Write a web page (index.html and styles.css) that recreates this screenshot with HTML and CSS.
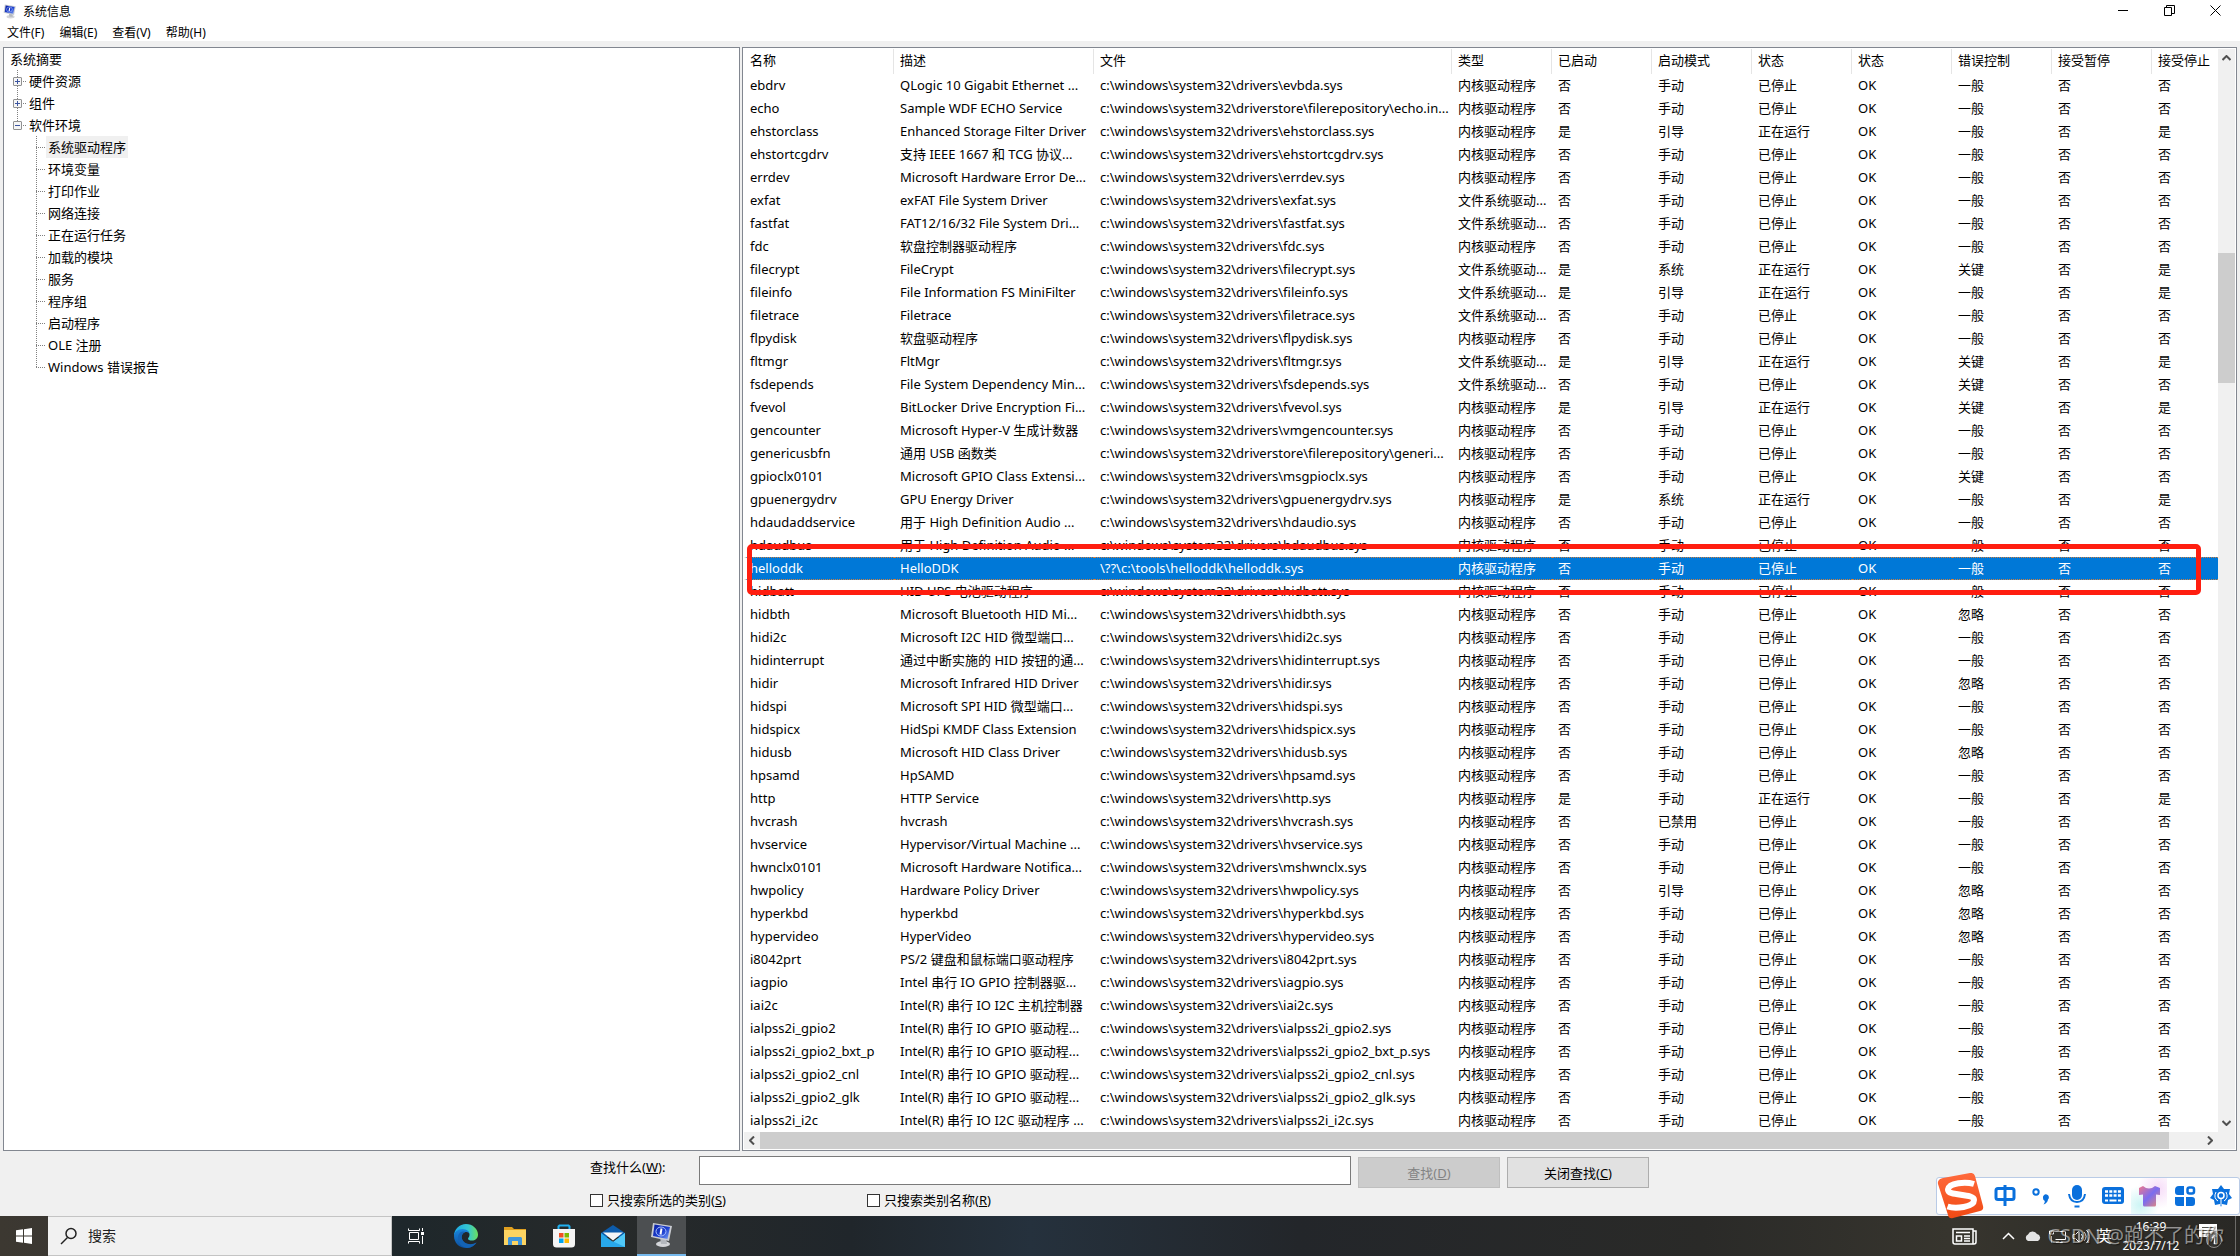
FILE: index.html
```html
<!DOCTYPE html>
<html lang="zh-CN">
<head>
<meta charset="utf-8">
<title>系统信息</title>
<link rel="stylesheet" href="styles.css">
</head>
<body>
<svg class="defs" width="0" height="0" aria-hidden="true">
  <defs>
    <linearGradient id="screen" x1="0" y1="0" x2="1" y2="1"><stop offset="0" stop-color="#0a1e9c"/><stop offset=".55" stop-color="#1c3fd0"/><stop offset="1" stop-color="#7fa4f5"/></linearGradient>
    <linearGradient id="edgeA" x1="0" y1="0" x2="1" y2="0"><stop offset="0" stop-color="#1ba8e6"/><stop offset=".6" stop-color="#35c6d0"/><stop offset="1" stop-color="#6be05c"/></linearGradient>
    <linearGradient id="edgeB" x1="0" y1="0" x2="0" y2="1"><stop offset="0" stop-color="#1a86dc"/><stop offset="1" stop-color="#0c4f9e"/></linearGradient>
    <linearGradient id="shirt" x1="0" y1="0" x2="1" y2="1"><stop offset="0" stop-color="#f0788c"/><stop offset=".5" stop-color="#7a6cf0"/><stop offset="1" stop-color="#f08a70"/></linearGradient>
    <linearGradient id="sogou" x1="0" y1="0" x2="0" y2="1"><stop offset="0" stop-color="#ff6a3c"/><stop offset="1" stop-color="#f04a14"/></linearGradient>
    <symbol id="msinfo" viewBox="0 0 24 26">
      <ellipse cx="13" cy="22" rx="7" ry="3" fill="#d4d6da"/>
      <path d="M10 15l6 1 1 6h-6z" fill="#b4b8be"/>
      <path d="M3 1l19 3-3 15L1 15z" fill="#c9ccd2"/>
      <path d="M4.500 2.500L20 5l-2.500 12L3 14z" fill="url(#screen)"/>
      <ellipse cx="11" cy="9.500" rx="5" ry="4.500" fill="none" stroke="#a9c0ff"/>
      <path d="M11.500 6.500l-1 6" stroke="#fff" stroke-width="2"/>
    </symbol>
  </defs>
</svg>

<header class="window-head">
  <div class="title-bar">
    <svg class="app-icon" width="14" height="15"><use href="#msinfo"/></svg>
    <h1 class="title">系统信息</h1>
    <div class="window-controls">
      <button type="button" class="window-button" aria-label="最小化"><svg width="11" height="11"><path d="M0 5.500h10" stroke="#000"/></svg></button>
      <button type="button" class="window-button" aria-label="还原"><svg width="11" height="11" fill="none" stroke="#000"><path d="M.5 2.500h7v8h-7zM2.500 2.500v-2h8v8h-3"/></svg></button>
      <button type="button" class="window-button" aria-label="关闭"><svg width="11" height="11"><path d="M.5 .5l10 10M10.500 .5l-10 10" stroke="#000"/></svg></button>
    </div>
  </div>
  <nav class="menu-bar">
    <button type="button" class="menu-item">文件(F)</button>
    <button type="button" class="menu-item">编辑(E)</button>
    <button type="button" class="menu-item">查看(V)</button>
    <button type="button" class="menu-item">帮助(H)</button>
  </nav>
</header>

<main class="panes">
  <nav class="pane tree-pane" aria-label="类别">
    <a class="tree-root" href="#">系统摘要</a>
    <ul class="tree">
      <li><div class="branch"><button type="button" class="expander plus" aria-label="展开"></button><span class="dash"></span><a href="#">硬件资源</a></div></li>
      <li><div class="branch"><button type="button" class="expander plus" aria-label="展开"></button><span class="dash"></span><a href="#">组件</a></div></li>
      <li><div class="branch"><button type="button" class="expander" aria-label="折叠"></button><span class="dash"></span><a href="#">软件环境</a></div>
        <ul class="leaves">
          <li class="leaf"><a class="current" href="#">系统驱动程序</a></li>
          <li class="leaf"><a href="#">环境变量</a></li>
          <li class="leaf"><a href="#">打印作业</a></li>
          <li class="leaf"><a href="#">网络连接</a></li>
          <li class="leaf"><a href="#">正在运行任务</a></li>
          <li class="leaf"><a href="#">加载的模块</a></li>
          <li class="leaf"><a href="#">服务</a></li>
          <li class="leaf"><a href="#">程序组</a></li>
          <li class="leaf"><a href="#">启动程序</a></li>
          <li class="leaf"><a href="#">OLE 注册</a></li>
          <li class="leaf"><a href="#">Windows 错误报告</a></li>
        </ul>
      </li>
    </ul>
  </nav>

  <section class="pane list-pane">
    <div class="list-view">
      <table class="drivers">
        <colgroup><col class="c-name"><col class="c-desc"><col class="c-file"><col span="8" class="c-short"></colgroup>
        <thead><tr><th>名称</th><th>描述</th><th>文件</th><th>类型</th><th>已启动</th><th>启动模式</th><th>状态</th><th>状态</th><th>错误控制</th><th>接受暂停</th><th>接受停止</th></tr></thead>
        <tbody id="driver-rows"></tbody>
      </table>
    </div>
    <div class="scroll-v" aria-hidden="true">
      <svg class="arrow-v" width="9" height="6"><path d="M.5 5L4.500 1l4 4" fill="none" stroke="#505050" stroke-width="2"/></svg>
      <span class="space-before-v"></span><span class="thumb-v"></span><span class="space-after-v"></span>
      <svg class="arrow-v" width="9" height="6"><path d="M.5 1l4 4 4-4" fill="none" stroke="#505050" stroke-width="2"/></svg>
    </div>
    <div class="scroll-h" aria-hidden="true">
      <svg class="arrow-h" width="6" height="9"><path d="M5 .5L1 4.500l4 4" fill="none" stroke="#505050" stroke-width="2"/></svg>
      <span class="thumb-h"></span><span class="space-after-h"></span>
      <svg class="arrow-h" width="6" height="9"><path d="M1 .5l4 4-4 4" fill="none" stroke="#505050" stroke-width="2"/></svg>
    </div>
    <div class="red-frame"></div>
  </section>
</main>

<form class="find-bar">
  <div class="find-row">
    <label class="find-label" for="find-text">查找什么(<u>W</u>):</label>
    <input class="find-input" id="find-text" type="text">
    <button type="button" class="find-button" disabled>查找(<u>D</u>)</button>
    <button type="button" class="find-button">关闭查找(<u>C</u>)</button>
  </div>
  <div class="check-row">
    <label class="check"><input type="checkbox">只搜索所选的类别(<u>S</u>)</label>
    <label class="check"><input type="checkbox">只搜索类别名称(<u>R</u>)</label>
  </div>
</form>

<footer class="taskbar">
  <button type="button" class="start" aria-label="开始"><svg width="16" height="16" fill="#fff"><path d="M0 2.300L7 1.300V7.500H0zM8 1.200L16 0v7.500H8zM0 8.500h7v6.200L0 13.700zM8 8.500h8V16L8 14.800z"/></svg></button>
  <label class="search">
    <svg width="18" height="18" fill="none" stroke="#222" stroke-width="1.500"><circle cx="11" cy="6.500" r="5"/><path d="M7.500 10.500L1 17"/></svg>
    <input type="text" placeholder="搜索" aria-label="搜索">
  </label>
  <div class="apps">
    <button type="button" class="app task-view" aria-label="任务视图"><svg width="17" height="16" fill="none" stroke="#fff"><path d="M1.500 4.500h9v7h-9zM.5 .5v2h11v-2M.5 15.500v-2h11v2M14.500 0v3M14.500 8v8"/><path d="M13 4h3v3h-3z" fill="#fff" stroke="none"/></svg></button>
    <button type="button" class="app" aria-label="Edge"><svg width="24" height="24"><path d="M0 12C0 5 5.500 0 12 0s12 5 12 10.500c0 4-3 6-6 6-2.500 0-4-.8-4-1.800s1.500-1.500 1.500-4C15.500 8 13 6 10 6 5 6 1 9 0 12z" fill="url(#edgeA)"/><path d="M0 12c0-4 4-7 8.500-7C13 5 15.500 8 15.500 10.500c0-1.500-2-3-4-2.500-3 .7-4.500 4-3.500 7 1.200 3.500 5 6 9 5.500 2.500-.3 4-1 5.500-2C20.500 22 16.500 24 12 24 5 24 0 18.500 0 12z" fill="url(#edgeB)"/><path d="M8 15c-1-3 .5-6.500 3.500-7C7 6 3.500 10 4 15c.6 5 4.500 8.500 9 8.900 4.500-.2 7.500-2.400 9.500-5.400-6 3.500-13 1-14.500-3.500z" fill="#1463b4"/></svg></button>
    <button type="button" class="app" aria-label="文件资源管理器"><svg width="22" height="18"><path d="M0 0h8l2 2h12v3H0z" fill="#e0a020"/><path d="M0 3h22v15H0z" fill="#fcd462"/><path d="M4 18v-7l1-1h12l1 1v7h-4v-4H8v4z" fill="#3f96dc"/></svg></button>
    <button type="button" class="app" aria-label="Microsoft Store"><svg width="24" height="24"><path d="M6.500 6V2.500l1-1h9l1 1V6" fill="none" stroke="#20b0f0" stroke-width="2"/><path d="M1 5h22v15q0 3.500-3.500 3.500h-15Q1 23.500 1 20z" fill="#f4f4f4"/><path d="M7 9h4.500v4.500H7z" fill="#f25022"/><path d="M12.500 9H17v4.500h-4.500z" fill="#7fba00"/><path d="M7 14.500h4.500V19H7z" fill="#00a4ef"/><path d="M12.500 14.500H17V19h-4.500z" fill="#ffb900"/></svg></button>
    <button type="button" class="app" aria-label="邮件"><svg width="24" height="24"><path d="M0 9L12 1l12 8v4H0z" fill="#0d5cab"/><path d="M0 9l12 9 12-9v14H0z" fill="#28a8ea"/><path d="M24 9v14L10 16.500l2 1.500z" fill="#50c8f8"/><path d="M2 8.500h20L12 16.500z" fill="#f6f6f6"/></svg></button>
    <button type="button" class="app active" aria-label="系统信息"><svg width="24" height="26"><use href="#msinfo"/></svg></button>
  </div>

  <div class="tray">
    <svg class="news" width="25" height="17" fill="none" stroke="#fff" stroke-width="1.500"><path d="M1 1h20v15H3q-2 0-2-2zM21 3h3v11q0 2-2 2h-2M4 4.500h14M4.500 8h5v5h-5zM12 8h6M12 10.500h6M12 13h6"/></svg>
    <svg class="chevron" width="13" height="8"><path d="M1 7l5.500-5.500L12 7" fill="none" stroke="#fff" stroke-width="1.500"/></svg>
    <svg class="cloud" width="18" height="12"><path d="M4 11a3.500 3.500 0 0 1 0-6.500A5 5 0 0 1 13 4a3.700 3.700 0 0 1 1 7z" fill="#e4e4e4"/></svg>
    <svg class="network" width="17" height="13" fill="none" stroke="#fff"><path d="M4.500 1.500h12v8h-10M2.500 6v6.500M7 12.500h7M.5 1v3h4V1z"/></svg>
    <svg class="volume" width="20" height="15" fill="none" stroke="#fff"><path d="M1 5.500h2.500L7 2v11L3.500 9.500H1zM9.500 5q2 2.500 0 5M12 3q4 4.500 0 9M14.500 1q6 6.500 0 13"/></svg>
    <span class="ime">英</span>
    <time class="clock"><span>16:39</span><span>2023/7/12</span></time>
    <svg class="notice" width="27" height="26"><path d="M1 1h18v13h-4l-4 4v-4H1z" fill="#fff"/><path d="M4 4.500h12M4 7.500h12M4 10.500h8" stroke="#55534c"/><circle cx="16" cy="17" r="7.500" fill="#3a3935" fill-opacity=".7" stroke="#8c8b88"/><path d="M14 15l2.500-2v8" fill="none" stroke="#fff" stroke-width="1.500"/></svg>
    <span class="show-desktop"></span>
  </div>
  <span class="watermark">CSDN @跑不了的你</span>
</footer>

<aside class="ime-bar" aria-label="输入法">
  <svg class="ime-logo" width="48" height="46"><path d="M6 5L33 0q4-.5 5 3l8 30q1 4-3 5l-27 7q-4 1-5-3L1 11Q0 6.500 6 5z" fill="url(#sogou)"/><path d="M37 11C29 8.500 12 9.500 11 16.500c-.8 7 26 3.500 26 10.500 0 7.500-19 9-26.500 6.500" fill="none" stroke="#fff" stroke-width="6"/></svg>
  <svg width="36" height="36" fill="none" stroke="#0a70dc" stroke-width="3"><path d="M9 12.500q0-2 2-2h14q2 0 2 2v7q0 2-2 2H11q-2 0-2-2zM18 7v21"/></svg>
  <svg width="36" height="36"><circle cx="13" cy="14" r="2.700" fill="none" stroke="#0a70dc" stroke-width="2"/><path d="M20 20a3 3 0 1 1 5 1.500q-.5 3.500-4.500 5 1.500-2 1.300-3.500A3 3 0 0 1 20 20z" fill="#0a70dc"/></svg>
  <svg width="36" height="36"><rect x="13" y="7" width="10" height="15" rx="5" fill="#0a70dc"/><path d="M10 16q1 8 8 8t8-8M15.500 28.500h5" fill="none" stroke="#0a70dc" stroke-width="2"/></svg>
  <svg width="36" height="36"><rect x="7" y="9" width="22" height="17" rx="3" fill="#0a70dc"/><path d="M10 13.500h16M10 17.500h16" stroke="#fff" stroke-width="2.500" stroke-dasharray="3 1.300"/><path d="M10 22.500h3M14.500 22.500h7M23 22.500h3" stroke="#fff" stroke-width="2"/></svg>
  <svg class="skin" width="36" height="36"><path d="M12 8q6 5 12 0l5 2v7l-4-.5V27q0 1.500-1.500 1.500h-10Q12 28.500 12 27V16.500L8 17v-7z" fill="url(#shirt)"/></svg>
  <svg width="36" height="36" fill="#0a70dc"><path d="M8 12q0-4 4-4h5v9h-6q-3 0-3-3zM8 19h9v9h-6q-3 0-3-3zM19 19h6q3 0 3 3v3q0 3-3 3h-6z"/><rect x="20.500" y="9.500" width="6.500" height="6" rx="2" fill="none" stroke="#0a70dc" stroke-width="2.500"/></svg>
  <svg width="36" height="36"><path d="M18 7l3 4h6l-1 5 3 4-4 2-1 5-5-1-1 3-1-3-5 1-1-5-4-2 3-4-1-5h6z" fill="#0a70dc"/><circle cx="18" cy="17.500" r="3" fill="none" stroke="#fff" stroke-width="1.500"/><path d="M13 14q-3 6 2 9M23 14q3 6-2 9M18 20v7" fill="none" stroke="#fff"/></svg>
</aside>
<script src="drivers.js"></script>
</body>
</html>
```
FILE: drivers.js
```javascript
// Each line: name | description | file | flags.
// A file without a directory lives in the drivers folder.
const DIR = 'c:\\windows\\system32\\drivers\\';
const LIST = String.raw`
ebdrv|QLogic 10 Gigabit Ethernet ...|evbda.sys|
echo|Sample WDF ECHO Service|c:\windows\system32\driverstore\filerepository\echo.in...|
ehstorclass|Enhanced Storage Filter Driver|ehstorclass.sys|run boot
ehstortcgdrv|支持 IEEE 1667 和 TCG 协议...|ehstortcgdrv.sys|
errdev|Microsoft Hardware Error De...|errdev.sys|
exfat|exFAT File System Driver|exfat.sys|fs
fastfat|FAT12/16/32 File System Dri...|fastfat.sys|fs
fdc|软盘控制器驱动程序|fdc.sys|
filecrypt|FileCrypt|filecrypt.sys|fs run system critical
fileinfo|File Information FS MiniFilter|fileinfo.sys|fs run boot
filetrace|Filetrace|filetrace.sys|fs
flpydisk|软盘驱动程序|flpydisk.sys|
fltmgr|FltMgr|fltmgr.sys|fs run boot critical
fsdepends|File System Dependency Min...|fsdepends.sys|fs critical
fvevol|BitLocker Drive Encryption Fi...|fvevol.sys|run boot critical
gencounter|Microsoft Hyper-V 生成计数器|vmgencounter.sys|
genericusbfn|通用 USB 函数类|c:\windows\system32\driverstore\filerepository\generi...|
gpioclx0101|Microsoft GPIO Class Extensi...|msgpioclx.sys|critical
gpuenergydrv|GPU Energy Driver|gpuenergydrv.sys|run system
hdaudaddservice|用于 High Definition Audio ...|hdaudio.sys|
hdaudbus|用于 High Definition Audio ...|hdaudbus.sys|
helloddk|HelloDDK|\??\c:\tools\helloddk\helloddk.sys|selected
hidbatt|HID UPS 电池驱动程序|hidbatt.sys|
hidbth|Microsoft Bluetooth HID Mi...|hidbth.sys|ignore
hidi2c|Microsoft I2C HID 微型端口...|hidi2c.sys|
hidinterrupt|通过中断实施的 HID 按钮的通...|hidinterrupt.sys|
hidir|Microsoft Infrared HID Driver|hidir.sys|ignore
hidspi|Microsoft SPI HID 微型端口...|hidspi.sys|
hidspicx|HidSpi KMDF Class Extension|hidspicx.sys|
hidusb|Microsoft HID Class Driver|hidusb.sys|ignore
hpsamd|HpSAMD|hpsamd.sys|
http|HTTP Service|http.sys|run
hvcrash|hvcrash|hvcrash.sys|disabled
hvservice|Hypervisor/Virtual Machine ...|hvservice.sys|
hwnclx0101|Microsoft Hardware Notifica...|mshwnclx.sys|
hwpolicy|Hardware Policy Driver|hwpolicy.sys|boot ignore
hyperkbd|hyperkbd|hyperkbd.sys|ignore
hypervideo|HyperVideo|hypervideo.sys|ignore
i8042prt|PS/2 键盘和鼠标端口驱动程序|i8042prt.sys|
iagpio|Intel 串行 IO GPIO 控制器驱...|iagpio.sys|
iai2c|Intel(R) 串行 IO I2C 主机控制器|iai2c.sys|
ialpss2i_gpio2|Intel(R) 串行 IO GPIO 驱动程...|ialpss2i_gpio2.sys|
ialpss2i_gpio2_bxt_p|Intel(R) 串行 IO GPIO 驱动程...|ialpss2i_gpio2_bxt_p.sys|
ialpss2i_gpio2_cnl|Intel(R) 串行 IO GPIO 驱动程...|ialpss2i_gpio2_cnl.sys|
ialpss2i_gpio2_glk|Intel(R) 串行 IO GPIO 驱动程...|ialpss2i_gpio2_glk.sys|
ialpss2i_i2c|Intel(R) 串行 IO I2C 驱动程序 ...|ialpss2i_i2c.sys|`;

const body = document.getElementById('driver-rows');
for (const line of LIST.trim().split('\n')) {
  const [name, description, file, flagText] = line.split('|');
  const flags = flagText.split(' ');
  const has = (flag) => flags.includes(flag);
  const running = has('run');
  const cells = [
    name,
    description,
    file.includes('\\') ? file : DIR + file,
    has('fs') ? '文件系统驱动...' : '内核驱动程序',
    running ? '是' : '否',
    has('boot') ? '引导' : has('system') ? '系统' : has('disabled') ? '已禁用' : '手动',
    running ? '正在运行' : '已停止',
    'OK',
    has('critical') ? '关键' : has('ignore') ? '忽略' : '一般',
    '否',
    running ? '是' : '否',
  ];
  const row = body.insertRow();
  if (has('selected')) row.className = 'selected';
  for (const text of cells) row.insertCell().textContent = text;
}
```
FILE: styles.css
```css
* { box-sizing: border-box; }

body {
  margin: 0;
  height: 100vh;
  display: flex;
  flex-direction: column;
  overflow: hidden;
  position: relative;
  background: #f0f0f0;
  color: #000;
  font: 13px/22px "Noto Sans", "Noto Sans CJK SC", sans-serif;
}

button, input { font: inherit; color: inherit; }
button { padding: 0; border: 0; background: none; }
a { color: inherit; text-decoration: none; }
ul { margin: 0; padding: 0; list-style: none; }
svg { display: block; flex: none; }
.defs { position: absolute; }

/* Title and menu */
.window-head { flex: none; background: #fff; font-size: 12px; }
.title-bar { display: flex; align-items: center; height: 23px; padding: 0 2px 0 3px; }
.title { flex: 1; margin: 0 0 0 6px; font-size: 12px; font-weight: 400; }
.window-controls { display: flex; align-self: flex-start; }
.window-button { width: 46px; height: 21px; display: grid; place-items: center; }
.menu-bar { display: flex; gap: 15px; height: 18px; padding-left: 7px; }
.menu-item { line-height: 20px; }

/* Panes */
.panes {
  flex: 1;
  min-height: 0;
  display: grid;
  grid-template-columns: 737fr 1495fr;
  grid-template-rows: minmax(0, 1fr);
  gap: 2px;
  padding: 6px 3px 0;
}
.pane { border: 1px solid #828790; background: #fff; padding: 1px; min-width: 0; }
.tree-pane { padding-top: 0; }

.tree-root { display: block; padding-left: 5px; }
.tree, .leaves { background: repeating-linear-gradient(#808080 0 1px, transparent 1px 2px) no-repeat; }
.tree { background-size: 1px 55px; background-position: 12px 0; }
.branch { display: flex; align-items: center; height: 22px; padding-left: 8px; }
.expander {
  width: 9px;
  height: 9px;
  border: 1px solid #919191;
  border-radius: 1px;
  background: linear-gradient(#3c55a0, #3c55a0) center / 5px 1px no-repeat, #f6f6f6;
}
.expander.plus {
  background: linear-gradient(#3c55a0, #3c55a0) center / 5px 1px no-repeat,
    linear-gradient(#3c55a0, #3c55a0) center / 1px 5px no-repeat, #f6f6f6;
}
.dash { width: 5px; height: 1px; margin-right: 2px; background: repeating-linear-gradient(90deg, transparent 0 1px, #808080 1px 2px); }
.leaves { background-size: 1px calc(100% - 11px); background-position: 31px 0; }
.leaf { height: 22px; padding-left: 31px; display: flex; }
.leaf::before {
  content: "";
  width: 10px;
  height: 1px;
  margin-top: 11px;
  background: repeating-linear-gradient(90deg, #808080 0 1px, transparent 1px 2px);
}
.leaf a { padding: 0 2px; }
.leaf .current { background: #f0f0f0; }

/* Driver list */
.list-pane {
  position: relative;
  display: grid;
  grid-template-columns: minmax(0, 1fr) 17px;
  grid-template-rows: minmax(0, 1fr) 17px;
}
.list-view { overflow: hidden; }
.drivers { width: 1508px; table-layout: fixed; border-collapse: separate; border-spacing: 0; }
.c-name { width: 150px; }
.c-desc { width: 200px; }
.c-file { width: 358px; }
.c-short { width: 100px; }
.drivers th, .drivers td { padding: 0 0 0 6px; text-align: left; font-weight: 400; vertical-align: top; white-space: nowrap; overflow: hidden; }
.drivers th { height: 25px; line-height: 23px; border-right: 1px solid #e5e5e5; }
.drivers td { height: 23px; line-height: 22px; }
.drivers .selected td {
  color: #fff;
  background: #0078d7;
  border: dotted #d08040;
  border-width: 1px 0;
  line-height: 20px;
}
.drivers .selected td:first-child { border-left: 4px solid #fff; padding-left: 2px; }
.red-frame {
  position: absolute;
  left: 4px;
  right: 35px;
  top: 496px;
  height: 51px;
  border: 5px solid #ff1e10;
  border-radius: 5px;
}

.scroll-v, .scroll-h { display: flex; align-items: center; background: #f0f0f0; }
.scroll-v { flex-direction: column; padding: 6px 0; }
.space-before-v { flex: 192; }
.thumb-v { flex: 130; width: 100%; background: #cdcdcd; }
.space-after-v { flex: 737; }
.scroll-h { grid-column: 1 / -1; padding: 0 22px 0 5px; }
.thumb-h { flex: 1408; align-self: stretch; margin-left: 5px; background: #cdcdcd; }
.space-after-h { flex: 38; }

/* Find bar */
.find-bar { flex: none; width: 1060px; height: 65px; margin: 0 auto; padding-top: 5px; }
.find-row { display: flex; height: 33px; padding-right: 1px; }
.find-label { width: 109px; }
.find-input { flex: 1; height: 29px; padding: 0 4px; border: 1px solid #7a7a7a; background: #fff; }
.find-button { width: 142px; height: 31px; margin: 1px 0 0 7px; border: 1px solid #adadad; background: #e1e1e1; }
.find-button:disabled { border-color: #bfbfbf; background: #ccc; color: #838383; }
.check-row { display: flex; }
.check { display: flex; align-items: center; width: 277px; white-space: pre; }
.check input { appearance: none; width: 13px; height: 13px; margin: 0 4px 0 0; border: 1px solid #333; background: #fff; }

/* Taskbar */
.taskbar {
  flex: none;
  display: flex;
  height: 40px;
  position: relative;
  color: #fff;
  background: linear-gradient(90deg, #3c3831 0, #3a3732 3%, #1e272b 18%, #272a2a 27%, #20262b 38%, #25313d 46%, #23262a 58%, #2a2a28 76%, #37352e 87%, #292825 100%);
}
.start { width: 48px; display: grid; place-items: center; }
.search {
  width: 344px;
  display: flex;
  align-items: center;
  padding-left: 12px;
  gap: 10px;
  border: 1px solid #c4c4c4;
  border-left: 0;
  background: #f1f1f1;
}
.search input { width: 200px; padding: 0; border: 0; background: none; color: #222; font-size: 14px; }
.search input::placeholder { color: #222; opacity: 1; }
.apps { display: flex; }
.app { width: 49px; display: grid; place-items: center; }
.active { background: #4c4f51; border-bottom: 2px solid #76b9ed; }
.tray { display: flex; align-items: center; margin-left: auto; }
.chevron { margin-left: 25px; }
.cloud { margin-left: 9px; }
.network { margin-left: 7px; }
.volume { margin-left: 6px; }
.ime { margin-left: 4px; font-size: 16px; }
.clock { width: 78px; display: flex; flex-direction: column; font-size: 12px; line-height: 19px; text-align: center; }
.notice { margin: 0 10px 0 8px; }
.show-desktop { width: 5px; height: 40px; border-left: 1px solid #6c6b68; }
.watermark {
  position: absolute;
  right: 16px;
  top: 5px;
  font-size: 20px;
  line-height: 30px;
  color: rgba(255, 255, 255, .5);
  text-shadow: 1px 1px 1px rgba(0, 0, 0, .5);
}

/* Floating input method bar */
.ime-bar {
  position: absolute;
  right: 0;
  bottom: 41px;
  height: 38px;
  display: flex;
  align-items: center;
  background: #fff;
  border: 1px solid #b9cbe6;
  border-radius: 3px;
}
.ime-logo { margin-right: 2px; }
.skin { background: radial-gradient(circle at 25% 75%, #cdf5f5, transparent 50%), radial-gradient(circle at 75% 30%, #f6dcf8, transparent 55%); }
```
